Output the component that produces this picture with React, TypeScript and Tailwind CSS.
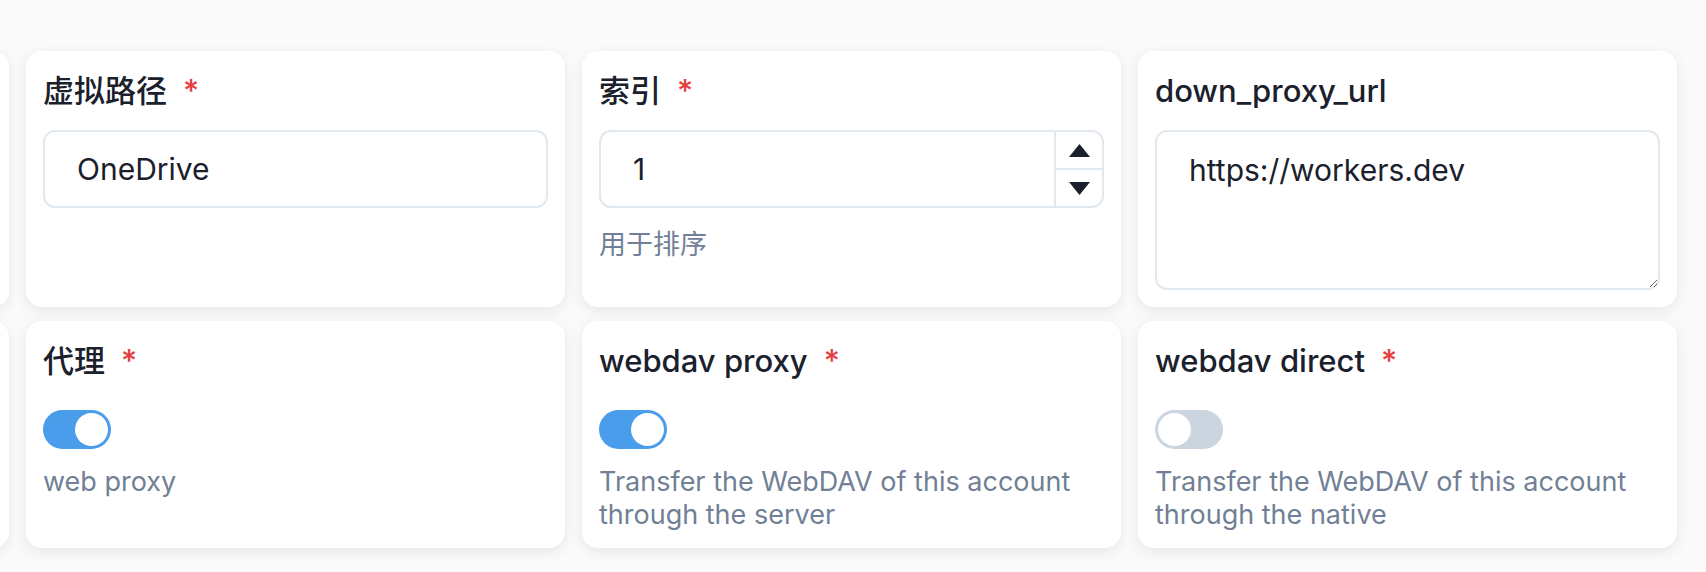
const FONT = "font-['Inter','Noto_Sans_CJK_SC',sans-serif]";

function Card({ children }: { children?: React.ReactNode }) {
  return (
    <div className="bg-white rounded-[16px] shadow-[0_4px_14px_rgba(0,0,0,0.08)] px-[17px] pt-[17px] pb-[17px] flex flex-col">
      {children}
    </div>
  );
}

function Label({ text, required }: { text: string; required?: boolean }) {
  return (
    <div className="text-[31px] leading-[46px] text-[#1a202c] font-medium">
      {text}
      {required && <span className="ml-[16px] text-[#e53e3e]">*</span>}
    </div>
  );
}

function Helper({ children, className = "" }: { children: React.ReactNode; className?: string }) {
  return <div className={`text-[27px] leading-[33px] text-[#718096] ${className}`}>{children}</div>;
}

function Toggle({ on }: { on: boolean }) {
  return (
    <div
      className={`mt-[26px] w-[68px] h-[39px] rounded-full p-[3px] flex ${
        on ? "bg-[#4a9deb] justify-end" : "bg-[#cbd5e0] justify-start"
      }`}
    >
      <div className="w-[33px] h-[33px] rounded-full bg-white" />
    </div>
  );
}

export default function App() {
  return (
    <div className={`min-h-screen bg-[#fafafa] overflow-hidden pt-[51px] ${FONT}`}>
      <div className="grid grid-cols-[repeat(4,539px)] gap-x-[17px] gap-y-[14px] ml-[-530px]">
        {/* row 1 */}
        <Card />

        <Card>
          <Label text="虚拟路径" required />
          <input
            readOnly
            defaultValue="OneDrive"
            className="mt-[16px] h-[78px] w-full rounded-[12px] border-2 border-[#e2e8f0] px-[32px] text-[30px] text-[#1a202c] outline-none"
          />
        </Card>

        <Card>
          <Label text="索引" required />
          <div className="mt-[16px] h-[78px] w-full rounded-[12px] border-2 border-[#e2e8f0] flex">
            <input
              readOnly
              defaultValue="1"
              className="flex-1 min-w-0 px-[32px] text-[30px] text-[#1a202c] outline-none bg-transparent"
            />
            <div className="w-[48px] border-l-2 border-[#e2e8f0] flex flex-col">
              <div className="flex-1 flex items-center justify-center border-b-2 border-[#e2e8f0]">
                <svg width="21" height="13" viewBox="0 0 21 13">
                  <path d="M10.5 0L21 13H0z" fill="#1a202c" />
                </svg>
              </div>
              <div className="flex-1 flex items-center justify-center">
                <svg width="21" height="13" viewBox="0 0 21 13">
                  <path d="M0 0h21L10.5 13z" fill="#1a202c" />
                </svg>
              </div>
            </div>
          </div>
          <Helper className="mt-[20px]">用于排序</Helper>
        </Card>

        <Card>
          <Label text="down_proxy_url" />
          <textarea
            readOnly
            defaultValue="https://workers.dev"
            className="mt-[16px] h-[160px] w-full rounded-[12px] border-2 border-[#e2e8f0] px-[32px] py-[16px] text-[30px] leading-[45px] text-[#1a202c] outline-none"
          />
        </Card>

        {/* row 2 */}
        <Card />

        <Card>
          <Label text="代理" required />
          <Toggle on />
          <Helper className="mt-[16px]">web proxy</Helper>
        </Card>

        <Card>
          <Label text="webdav proxy" required />
          <Toggle on />
          <Helper className="mt-[16px]">
            Transfer the WebDAV of this account
            <br />
            through the server
          </Helper>
        </Card>

        <Card>
          <Label text="webdav direct" required />
          <Toggle on={false} />
          <Helper className="mt-[16px]">
            Transfer the WebDAV of this account
            <br />
            through the native
          </Helper>
        </Card>
      </div>
    </div>
  );
}
